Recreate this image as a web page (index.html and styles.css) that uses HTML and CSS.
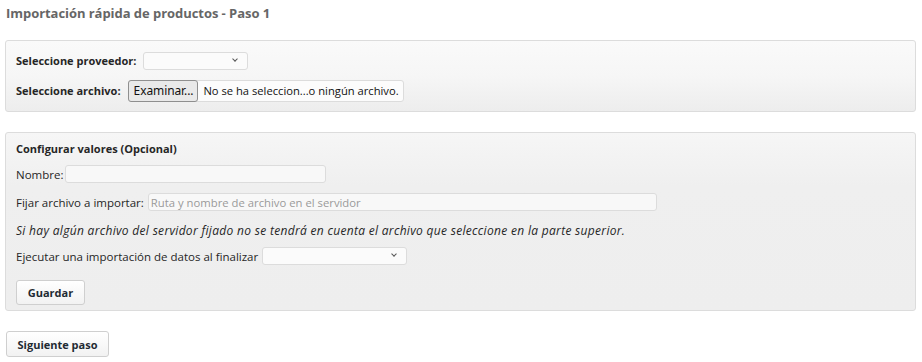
FILE: index.html
```html
<!DOCTYPE html>
<html lang="es">
<head>
<meta charset="utf-8">
<title>Importación rápida de productos</title>
<link rel="stylesheet" href="styles.css">
</head>
<body>
<h1 class="page-title">Importación rápida de productos - Paso 1</h1>

<div class="panel panel-top">
  <div class="row row-top">
    <label class="lbl-bold">Seleccione proveedor:</label>
    <span class="select sel-prov"><span class="chev"></span></span>
  </div>
  <div class="row row-top">
    <label class="lbl-bold">Seleccione archivo:</label>
    <span class="file-input"><span class="file-btn">Examinar...</span><span class="file-name">No se ha seleccion...o ningún archivo.</span></span>
  </div>
</div>

<div class="panel panel-config">
  <div class="panel-heading">Configurar valores (Opcional)</div>
  <div class="row row-name">
    <label class="lbl-name">Nombre:</label>
    <span class="text-input in-name"></span>
  </div>
  <div class="row row-path">
    <label>Fijar archivo a importar:</label>
    <span class="text-input in-path"><span class="placeholder">Ruta y nombre de archivo en el servidor</span></span>
  </div>
  <p class="note">Si hay algún archivo del servidor fijado no se tendrá en cuenta el archivo que seleccione en la parte superior.</p>
  <div class="row row-import">
    <label>Ejecutar una importación de datos al finalizar</label>
    <span class="select sel-import"><span class="chev"></span></span>
  </div>
  <div class="row row-btn">
    <button class="btn btn-save">Guardar</button>
  </div>
</div>

<button class="btn btn-next">Siguiente paso</button>
</body>
</html>
```

FILE: styles.css
```css
html, body {
  margin: 0;
  padding: 0;
  background: #fff;
}
body {
  padding: 4px 6px 0 5px;
  font-family: "Open Sans", "DejaVu Sans", sans-serif;
  font-size: 11.5px;
  color: #262626;
}
.page-title {
  margin: 0 0 0 1px;
  font-size: 13px;
  font-weight: bold;
  color: #666;
  line-height: 18px;
  letter-spacing: -0.05px;
}
.panel {
  border: 1px solid #dcdcdc;
  border-radius: 3px;
  box-sizing: border-box;
  padding: 0 10px;
}
.panel-top {
  margin-top: 18px;
  height: 72px;
  padding-top: 9px;
  background: linear-gradient(#fafafa 0%, #f6f6f6 50%, #ededed 100%);
}
.panel-config {
  margin-top: 20px;
  height: 179px;
  padding-top: 8px;
  background: linear-gradient(#f6f6f6 0%, #efefef 30%, #eeeeee 100%);
}
.row {
  display: flex;
  align-items: center;
}
.row-top {
  height: 21px;
  margin-bottom: 9px;
}
label {
  white-space: nowrap;
  margin-right: 4px;
}
.lbl-name { margin-right: 2px; }
.lbl-bold {
  font-weight: bold;
  font-size: 11px;
  margin-right: 7px;
}
.panel-heading {
  font-weight: bold;
  font-size: 11px;
  line-height: 16px;
  margin-bottom: 8px;
}
.row-name { height: 18px; margin-bottom: 10px; }
.row-path { height: 18px; }
.row-import { height: 18px; margin-bottom: 10px; }
.row-btn { height: 25px; }
.select {
  position: relative;
  display: inline-block;
  box-sizing: border-box;
  height: 18px;
  border: 1px solid #dcdcdc;
  border-radius: 3px;
  background: #fbfbfb;
}
.sel-prov { width: 105px; }
.sel-import { width: 145px; }
.chev {
  position: absolute;
  right: 10px;
  top: 4px;
  width: 3px;
  height: 3px;
  border-right: 1px solid #555;
  border-bottom: 1px solid #555;
  transform: rotate(45deg);
}
.file-input {
  display: inline-flex;
  align-items: center;
  box-sizing: border-box;
  height: 22px;
  width: 276px;
  border: 1px solid #dcdcdc;
  border-radius: 3px;
  background: #fcfcfc;
}
.file-btn {
  box-sizing: border-box;
  height: 22px;
  line-height: 20px;
  padding: 0 4px 0 5px;
  margin-left: -1px;
  border: 1px solid #8f8f8f;
  border-radius: 3px;
  background: #e9e9e9;
  color: #111;
  font-family: "Noto Sans", "Open Sans", sans-serif;
  font-size: 12px;
  margin-right: 5px;
  letter-spacing: -0.1px;
}
.file-name {
  color: #111;
  font-size: 11.2px;
}
.text-input {
  display: inline-flex;
  align-items: center;
  box-sizing: border-box;
  height: 18px;
  border: 1px solid #dcdcdc;
  border-radius: 3px;
  background: #f8f8f8;
  padding-left: 2px;
}
.in-name { width: 261px; }
.in-path { width: 509px; }
.placeholder {
  color: #9a9a9a;
  font-size: 11.3px;
}
.note {
  margin: 12px 0 8px 0;
  font-style: italic;
  font-size: 12px;
  letter-spacing: 0.31px;
  line-height: 16px;
}
.btn {
  font-family: inherit;
  font-size: 11px;
  font-weight: bold;
  color: #1f2b33;
  height: 25px;
  border: 1px solid #cfcfcf;
  border-radius: 3px;
  background: linear-gradient(#ffffff, #f2f2f2);
}
.btn-save {
  width: 69px;
  margin-top: 10px;
}
.btn-next {
  width: 103px;
  height: 26px;
  margin: 20px 0 0 1px;
}
```
